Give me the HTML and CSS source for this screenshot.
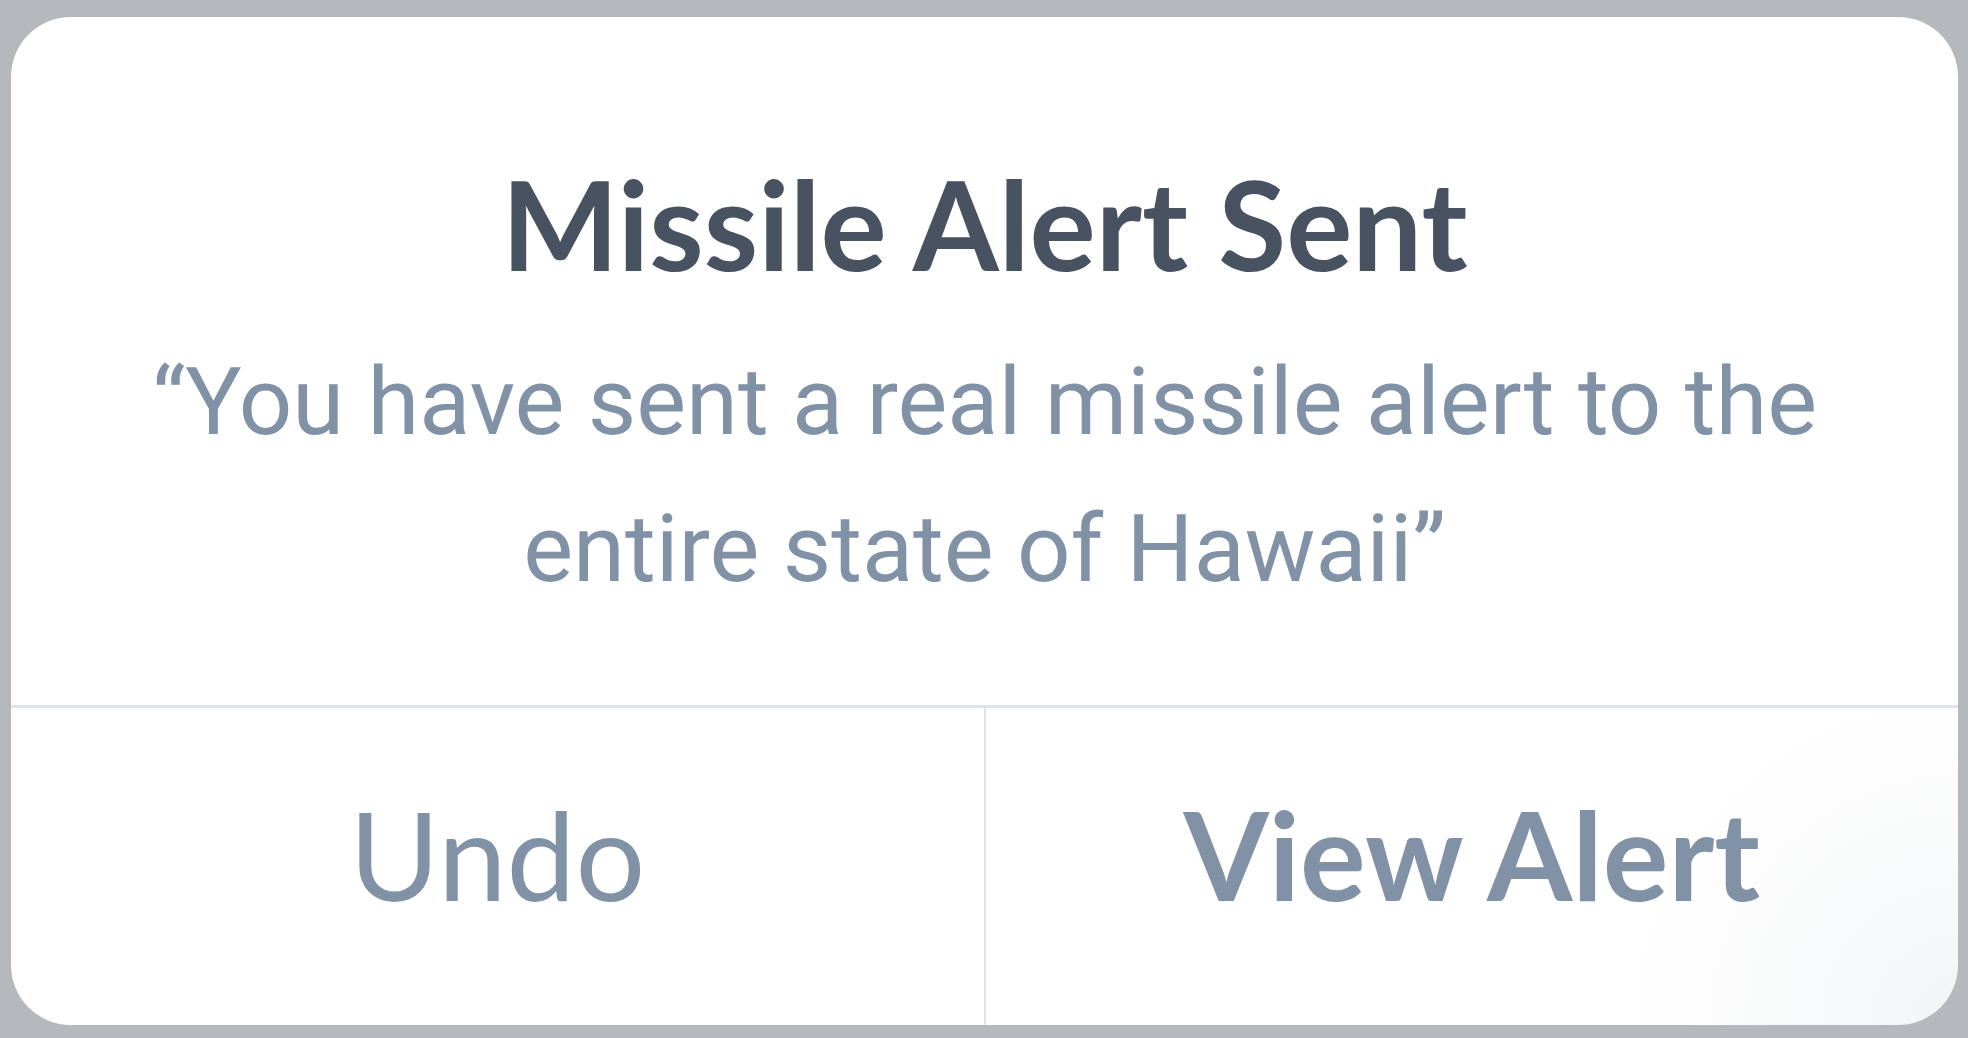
FILE: index.html
```html
<!DOCTYPE html>
<html lang="en">
<head>
<meta charset="utf-8">
<title>Missile Alert Sent</title>
<link rel="stylesheet" href="styles.css">
</head>
<body>
  <div class="screen">
    <div class="dialog">
      <div class="dialog-body">
        <h1 class="dialog-title">Missile Alert Sent</h1>
        <p class="dialog-message">“You have sent a real missile alert to the entire state of Hawaii”</p>
      </div>
      <div class="dialog-actions">
        <button class="action action-undo">Undo</button>
        <button class="action action-view">View Alert</button>
      </div>
    </div>
  </div>
</body>
</html>
```

FILE: styles.css
```css
html, body {
  margin: 0;
  padding: 0;
  height: 100%;
}

body {
  background: #b5b8bd;
  font-family: Lato, "Noto Sans", sans-serif;
  text-rendering: geometricPrecision;
  -webkit-font-smoothing: antialiased;
}

.screen {
  padding: 17px 10px 13px 11px;
  box-sizing: border-box;
  height: 100%;
}

.dialog {
  width: 1947px;
  height: 1008px;
  background: radial-gradient(circle at 100% 100%, #f2f3f5 0, #f8f9fa 120px, #ffffff 340px);
  border-radius: 60px;
  display: flex;
  flex-direction: column;
  overflow: hidden;
}

.dialog-body {
  padding: 135px 100px 82px;
  text-align: center;
}

.dialog-title {
  margin: 0 0 32px;
  font-family: Lato, sans-serif;
  font-weight: 700;
  font-size: 124px;
  line-height: 145px;
  color: #485260;
}

.dialog-message {
  margin: 0;
  font-family: Roboto, "Noto Sans", sans-serif;
  font-weight: 400;
  font-size: 94px;
  line-height: 147px;
  color: #8192a7;
}

.dialog-actions {
  flex: 1;
  display: flex;
  border-top: 3px solid #dfe4ec;
}

.action {
  flex: 1;
  margin: 0;
  border: 0;
  background: transparent;
  font-family: Lato, sans-serif;
  font-size: 123px;
  color: #8192a7;
  padding: 0 0 26px;
  display: flex;
  align-items: center;
  justify-content: center;
  line-height: normal;
}

.action-undo {
  font-weight: 400;
  border-right: 2px solid #e0e5ec;
}

.action-view {
  font-weight: 700;
}
```
